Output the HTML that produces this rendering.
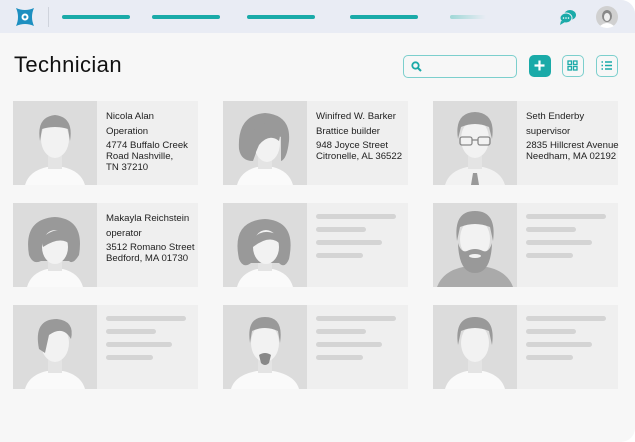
<!DOCTYPE html>
<html><head><style>
*{margin:0;padding:0;box-sizing:border-box}
body{width:635px;height:442px;background:#fff;font-family:"Liberation Sans",sans-serif;position:relative;overflow:hidden}
.frame{position:absolute;left:0;top:0;width:635px;height:442px;background:#f7f7f7;border-radius:0 14px 14px 0;overflow:hidden}
.top{position:absolute;left:0;top:0;width:635px;height:33px;background:#e9ecf4}
.bar{position:absolute;top:15px;height:4px;border-radius:2px;background:#1aaaa8}
.card{position:absolute;width:185px;height:84px;background:#efefef}
.card svg{position:absolute;left:0;top:0}
.t{position:absolute;left:93px;top:8px;font-size:9.6px;line-height:15px;color:#222;white-space:nowrap}
.t .a{line-height:11px;margin-top:1px}
.sk{position:absolute;left:93px;height:5px;border-radius:3px;background:#d4d4d4}
h1{position:absolute;left:14px;top:52px;font-size:22px;letter-spacing:0.4px;font-weight:normal;color:#111}
.btn{position:absolute;top:55px;width:22px;height:22px;border:1.5px solid #7ccfcd;border-radius:5px}
</style></head><body>
<div class="frame">
<div class="top"></div>
<svg style="position:absolute;left:14px;top:6px" width="22" height="22" viewBox="0 0 22 22"><path d="M2 2 Q11 6 20 2 Q16 11 20 20 Q11 16 2 20 Q6 11 2 2Z" fill="#1d8fc0"/><circle cx="11" cy="11" r="3.5" fill="#fff"/><circle cx="11" cy="11" r="1.5" fill="#1d8fc0"/></svg>
<div style="position:absolute;left:48px;top:7px;width:1px;height:20px;background:#cfd3dc"></div>
<div class="bar" style="left:62px;width:68px"></div>
<div class="bar" style="left:152px;width:68px"></div>
<div class="bar" style="left:247px;width:68px"></div>
<div class="bar" style="left:350px;width:68px"></div>
<div class="bar" style="left:450px;width:36px;background:linear-gradient(90deg,#9fd7d6,#e9ecf4)"></div>
<svg style="position:absolute;left:559px;top:9px" width="18" height="16" viewBox="0 0 18 16"><ellipse cx="11" cy="6" rx="6" ry="5" fill="#1aaaa8"/><ellipse cx="7" cy="9" rx="6" ry="5" fill="#1aaaa8" stroke="#e9ecf4" stroke-width="1"/><path d="M2 12 L1 16 L6 13Z" fill="#1aaaa8"/><circle cx="4.5" cy="9" r=".8" fill="#fff"/><circle cx="7" cy="9" r=".8" fill="#fff"/><circle cx="9.5" cy="9" r=".8" fill="#fff"/></svg>
<svg style="position:absolute;left:596px;top:6px" width="22" height="22" viewBox="0 0 22 22"><circle cx="11" cy="11" r="11" fill="#d0d0d0"/><ellipse cx="11" cy="10" rx="5" ry="6" fill="#888"/><ellipse cx="11" cy="11" rx="3" ry="4" fill="#eee"/><path d="M4 20 Q11 14 18 20 Q11 24 4 20Z" fill="#fff"/></svg>
<h1>Technician</h1>
<div style="position:absolute;left:403px;top:55px;width:114px;height:23px;border:1.5px solid #7ccfcd;border-radius:5px"></div>
<svg style="position:absolute;left:411px;top:61px" width="11" height="11" viewBox="0 0 11 11"><circle cx="4.5" cy="4.5" r="3.2" fill="none" stroke="#1aaaa8" stroke-width="1.8"/><path d="M7 7 L10 10" stroke="#1aaaa8" stroke-width="2"/></svg>
<div class="btn" style="left:529px;background:#1aaaa8;border-color:#1aaaa8"><svg width="19" height="19" viewBox="0 0 19 19"><path d="M9.5 4.5V14.5M4.5 9.5H14.5" stroke="#fff" stroke-width="2.2"/></svg></div>
<div class="btn" style="left:562px"><svg width="19" height="19" viewBox="0 0 19 19"><g fill="none" stroke="#1aaaa8" stroke-width="1.3"><rect x="5" y="5" width="3.5" height="3.5"/><rect x="10.5" y="5" width="3.5" height="3.5"/><rect x="5" y="10.5" width="3.5" height="3.5"/><rect x="10.5" y="10.5" width="3.5" height="3.5"/></g></svg></div>
<div class="btn" style="left:596px"><svg width="19" height="19" viewBox="0 0 19 19"><g stroke="#1aaaa8" stroke-width="1.5"><path d="M4.5 6H6M4.5 9.5H6M4.5 13H6M8 6H15M8 9.5H15M8 13H15"/></g></svg></div>

<div class="card" style="left:13px;top:101px"><svg width="84" height="84"><rect width="84" height="84" fill="#dcdcdc"/><path d="M12 84 Q16 70 34 66 L50 66 Q68 70 72 84Z" fill="#fafafa"/><rect x="35" y="52" width="14" height="16" fill="#e4e4e4"/><ellipse cx="42" cy="38" rx="14" ry="19" fill="#f2f2f2"/><path d="M27 40 Q23 16 42 14 Q61 16 57 40 L55 28 Q42 24 29 28Z" fill="#999"/></svg>
<div class="t">Nicola Alan<br>Operation<div class="a">4774 Buffalo Creek<br>Road Nashville,<br>TN 37210</div></div></div>

<div class="card" style="left:223px;top:101px"><svg width="84" height="84"><rect width="84" height="84" fill="#dcdcdc"/><path d="M14 84 Q18 70 34 66 L50 66 Q66 70 70 84Z" fill="#fafafa"/><rect x="35" y="52" width="14" height="16" fill="#e4e4e4"/><path d="M16 48 Q14 14 42 12 Q68 14 66 40 Q64 58 58 60 L58 36 Q46 30 38 38 L30 60 Q18 60 16 48Z" fill="#999"/><ellipse cx="44" cy="42" rx="13" ry="19" fill="#f2f2f2"/><path d="M30 30 Q42 14 58 30 L56 40 Q46 32 36 44 L30 58Z" fill="#999"/></svg>
<div class="t">Winifred W. Barker<br>Brattice builder<div class="a">948 Joyce Street<br>Citronelle, AL 36522</div></div></div>

<div class="card" style="left:433px;top:101px"><svg width="84" height="84"><rect width="84" height="84" fill="#dcdcdc"/><path d="M12 84 Q16 70 34 66 L50 66 Q68 70 72 84Z" fill="#f2f2f2"/><path d="M40 72 L44 72 L46 84 L38 84Z" fill="#999"/><rect x="35" y="52" width="14" height="16" fill="#e4e4e4"/><ellipse cx="42" cy="38" rx="14" ry="19" fill="#f2f2f2"/><path d="M25 38 Q21 12 42 11 Q63 12 59 38 L56 26 Q42 20 28 26Z" fill="#999"/><g fill="none" stroke="#888" stroke-width="1.3"><rect x="27" y="36" width="12" height="8" rx="2"/><rect x="45" y="36" width="12" height="8" rx="2"/><path d="M39 39H45"/></g></svg>
<div class="t">Seth Enderby<br>supervisor<div class="a">2835 Hillcrest Avenue<br>Needham, MA 02192</div></div></div>

<div class="card" style="left:13px;top:203px"><svg width="84" height="84"><rect width="84" height="84" fill="#dcdcdc"/><path d="M14 84 Q18 70 34 66 L50 66 Q66 70 70 84Z" fill="#fafafa"/><rect x="35" y="52" width="14" height="16" fill="#e4e4e4"/><path d="M16 52 Q10 16 42 14 Q72 16 66 52 Q60 62 56 58 L28 58 Q20 62 16 52Z" fill="#999"/><ellipse cx="42" cy="44" rx="13" ry="17" fill="#f2f2f2"/><path d="M28 36 Q42 22 58 30 L58 42 Q48 32 30 44Z" fill="#999"/></svg>
<div class="t">Makayla Reichstein<br>operator<div class="a">3512 Romano Street<br>Bedford, MA 01730</div></div></div>

<div class="card" style="left:223px;top:203px"><svg width="84" height="84"><rect width="84" height="84" fill="#dcdcdc"/><path d="M14 84 Q18 70 34 66 L50 66 Q66 70 70 84Z" fill="#fafafa"/><rect x="35" y="52" width="14" height="16" fill="#e4e4e4"/><path d="M16 56 Q8 18 42 16 Q74 18 66 56 Q62 66 56 60 L28 60 Q20 66 16 56Z" fill="#999"/><ellipse cx="43" cy="44" rx="13" ry="17" fill="#f2f2f2"/><path d="M28 38 Q40 22 58 34 L58 42 Q48 30 30 44Z" fill="#999"/></svg>
<div class="sk" style="top:11px;width:80px"></div><div class="sk" style="top:24px;width:50px"></div><div class="sk" style="top:37px;width:66px"></div><div class="sk" style="top:50px;width:47px"></div></div>

<div class="card" style="left:433px;top:203px"><svg width="84" height="84"><rect width="84" height="84" fill="#dcdcdc"/><path d="M4 84 Q10 68 30 64 L54 64 Q74 68 80 84Z" fill="#aaa"/><ellipse cx="42" cy="36" rx="15" ry="20" fill="#f2f2f2"/><path d="M24 38 Q20 8 42 8 Q64 8 60 38 L57 24 Q42 18 27 24Z" fill="#999"/><path d="M25 40 Q26 70 42 70 Q58 70 59 40 Q56 50 50 48 Q42 44 34 48 Q28 50 25 40Z" fill="#999"/><ellipse cx="42" cy="53" rx="6" ry="2" fill="#f2f2f2"/></svg>
<div class="sk" style="top:11px;width:80px"></div><div class="sk" style="top:24px;width:50px"></div><div class="sk" style="top:37px;width:66px"></div><div class="sk" style="top:50px;width:47px"></div></div>

<div class="card" style="left:13px;top:305px"><svg width="84" height="84"><rect width="84" height="84" fill="#dcdcdc"/><path d="M12 84 Q16 70 34 66 L50 66 Q68 70 72 84Z" fill="#fafafa"/><rect x="35" y="52" width="14" height="16" fill="#e4e4e4"/><ellipse cx="42" cy="38" rx="14" ry="19" fill="#f2f2f2"/><path d="M26 44 Q20 14 44 14 Q62 16 58 34 Q50 20 36 30 L32 48Z" fill="#999"/></svg>
<div class="sk" style="top:11px;width:80px"></div><div class="sk" style="top:24px;width:50px"></div><div class="sk" style="top:37px;width:66px"></div><div class="sk" style="top:50px;width:47px"></div></div>

<div class="card" style="left:223px;top:305px"><svg width="84" height="84"><rect width="84" height="84" fill="#dcdcdc"/><path d="M8 84 Q12 70 34 66 L50 66 Q72 70 76 84Z" fill="#fafafa"/><rect x="35" y="52" width="14" height="16" fill="#e4e4e4"/><ellipse cx="42" cy="38" rx="14" ry="19" fill="#f2f2f2"/><path d="M27 38 Q23 12 42 12 Q61 12 57 38 L55 26 Q42 20 29 26Z" fill="#999"/><path d="M36 50 Q42 46 48 50 L46 58 Q42 62 38 58Z" fill="#888"/></svg>
<div class="sk" style="top:11px;width:80px"></div><div class="sk" style="top:24px;width:50px"></div><div class="sk" style="top:37px;width:66px"></div><div class="sk" style="top:50px;width:47px"></div></div>

<div class="card" style="left:433px;top:305px"><svg width="84" height="84"><rect width="84" height="84" fill="#dcdcdc"/><path d="M12 84 Q16 70 34 66 L50 66 Q68 70 72 84Z" fill="#fafafa"/><rect x="35" y="52" width="14" height="16" fill="#e4e4e4"/><ellipse cx="42" cy="38" rx="14" ry="19" fill="#f2f2f2"/><path d="M25 40 Q21 12 42 12 Q63 12 59 40 L56 26 Q42 20 28 26Z" fill="#999"/></svg>
<div class="sk" style="top:11px;width:80px"></div><div class="sk" style="top:24px;width:50px"></div><div class="sk" style="top:37px;width:66px"></div><div class="sk" style="top:50px;width:47px"></div></div>
</div>
</body></html>
